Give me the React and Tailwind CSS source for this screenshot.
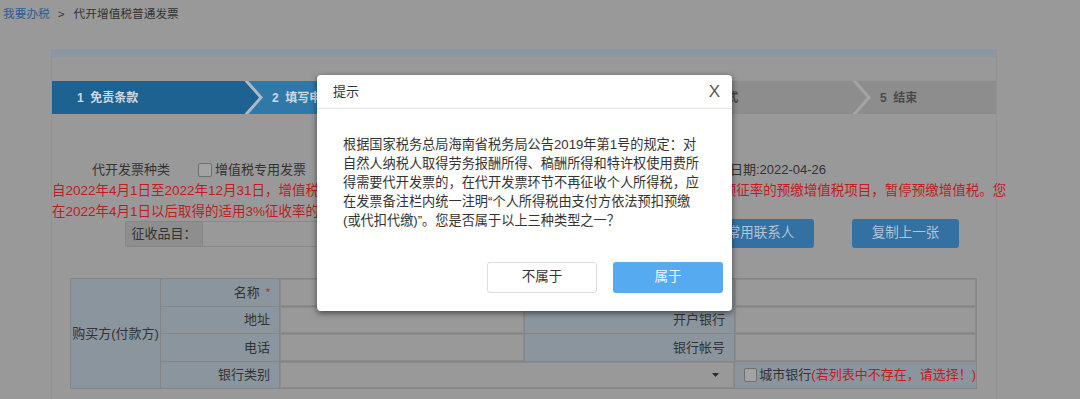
import React from "react";

function Arrow({ fill, line }) {
  return (
    <svg className="absolute top-0 -right-[16px] z-[1]" width="18" height="33" viewBox="0 0 18 33">
      <polygon points="0,0 15,16.5 0,33" fill={fill} />
      <polyline points="0.5,-1 16,16.5 0.5,34" fill="none" stroke={line} strokeWidth="3" />
    </svg>
  );
}

function Check({ className }) {
  return <span className={"inline-block w-[14px] h-[14px] rounded-[2px] border border-[#6f6f6f] bg-[#a3a3a3] " + (className || "")} />;
}

export default function App() {
  return (
    <div className="w-[1080px] h-[399px] overflow-hidden relative bg-[#999999] text-[#333333] font-['Liberation_Sans','Noto_Sans_CJK_SC',sans-serif]">
      <div className="h-[49px] pt-[6px] pl-[3px] text-[11.7px] leading-[16px] flex items-start">
        <span className="text-[#2c5b96]">我要办税</span>
        <span className="ml-[8px] text-[#3a3a3a]">&gt;</span>
        <span className="ml-[9px] text-[#333333]">代开增值税普通发票</span>
      </div>

      <div className="ml-[51px] w-[946px] h-[350px] border-x border-[#939393]">
        <div className="h-[8px] bg-[#8b97a2]" />

        <div className="mt-[24px] h-[33px] flex bg-[#8d8d8d] text-[12px] font-bold">
          <div className="relative w-[195px] h-full flex items-center pl-[25px] bg-[#1d6290] text-[#cdd9e2]">
            <span>1&nbsp;&nbsp;免责条款</span>
            <Arrow fill="#1d6290" line="#aeb9c1" />
          </div>
          <div className="relative w-[203px] h-full flex items-center pl-[25px] bg-[#2f78a8] text-[#cdd9e2]">
            <span>2&nbsp;&nbsp;填写申请表</span>
            <Arrow fill="#2f78a8" line="#aeb9c1" />
          </div>
          <div className="relative w-[202px] h-full flex items-center pl-[25px] text-[#4a4a4a]">
            <span>3&nbsp;&nbsp;确认信息</span>
            <Arrow fill="#8d8d8d" line="#a4a4a4" />
          </div>
          <div className="relative w-[203px] h-full flex items-center pl-[25px] text-[#4a4a4a]">
            <span>4&nbsp;&nbsp;缴款方式</span>
            <Arrow fill="#8d8d8d" line="#a4a4a4" />
          </div>
          <div className="relative flex-1 h-full flex items-center pl-[25px] text-[#4a4a4a]">
            <span>5&nbsp;&nbsp;结束</span>
          </div>
        </div>

        <div className="mt-[46px] h-[20px] flex items-center text-[13px]">
          <span className="ml-[40px]">代开发票种类</span>
          <Check className="ml-[28px]" />
          <span className="ml-[3px]">增值税专用发票</span>
          <Check className="ml-[20px]" />
          <span className="ml-[3px]">增值税普通发票</span>
          <span className="ml-auto mr-[170px]">申请日期:2022-04-26</span>
        </div>

        <div className="text-[13.5px] leading-[21px] text-[#c21b1f] whitespace-nowrap">
          <div>自2022年4月1日至2022年12月31日，增值税小规模纳税人适用3%征收率的应税销售收入，免征增值税；适用3%预征率的预缴增值税项目，暂停预缴增值税。您</div>
          <div>在2022年4月1日以后取得的适用3%征收率的应税销售收入，可以开具免税普通发票。</div>
        </div>

        <div className="-mt-[3px] h-[29px] flex items-center">
          <div className="ml-[73px] flex h-[26px]">
            <div className="w-[78px] h-full rounded-l-[3px] border border-[#868686] bg-[#8e8e8e] flex items-center justify-center text-[13px]">
              征收品目：
            </div>
            <div className="w-[220px] h-full border-y border-r border-[#8a8a8a] bg-[#999999]" />
          </div>
          <div className="ml-auto mr-[37px] flex gap-[38px]">
            <div className="w-[107px] h-[29px] rounded-[3px] bg-[#3471a3] text-[#b0c5d6] text-[13.5px] flex items-center justify-center">常用联系人</div>
            <div className="w-[107px] h-[29px] rounded-[3px] bg-[#3471a3] text-[#b0c5d6] text-[13.5px] flex items-center justify-center">复制上一张</div>
          </div>
        </div>

        <div className="mt-[30px] ml-[18px] w-[907px] grid grid-cols-[89px_118px_244px_209px_241px] grid-rows-[27px_26px_27px_26px] gap-px bg-[#858585] border border-[#858585] text-[13px]">
          <div className="row-span-4 bg-[#8b959d] flex items-center justify-center">购买方(付款方)</div>

          <div className="bg-[#8b959d] flex items-center justify-end pr-[9px]">
            名称<span className="ml-[6px] text-[#c21b1f] text-[11px]">*</span>
          </div>
          <div className="bg-[#999999] border border-[#8c8c8c]" />
          <div className="bg-[#8b959d] flex items-center justify-end pr-[9px]">纳税人识别号</div>
          <div className="bg-[#999999] border border-[#8c8c8c]" />

          <div className="bg-[#8b959d] flex items-center justify-end pr-[9px]">地址</div>
          <div className="bg-[#999999] border border-[#8c8c8c]" />
          <div className="bg-[#8b959d] flex items-center justify-end pr-[9px]">开户银行</div>
          <div className="bg-[#999999] border border-[#8c8c8c]" />

          <div className="bg-[#8b959d] flex items-center justify-end pr-[9px]">电话</div>
          <div className="bg-[#999999] border border-[#8c8c8c]" />
          <div className="bg-[#8b959d] flex items-center justify-end pr-[9px]">银行帐号</div>
          <div className="bg-[#999999] border border-[#8c8c8c]" />

          <div className="bg-[#8b959d] flex items-center justify-end pr-[9px]">银行类别</div>
          <div className="col-span-2 bg-[#999999] border border-[#8c8c8c] flex items-center justify-end pr-[14px]">
            <svg width="7" height="4" viewBox="0 0 7 4"><polygon points="0,0 7,0 3.5,4" fill="#2a2a2a" /></svg>
          </div>
          <div className="bg-[#8b959d] flex items-center pl-[9px] whitespace-nowrap">
            <Check />
            <span className="ml-[2px]">城市银行</span>
            <span className="text-[#c21b1f]">(若列表中不存在，请选择！)</span>
          </div>
        </div>
      </div>

      <div className="absolute z-20 left-[317px] top-[75px] w-[415px] h-[236px] bg-white rounded-[4px] shadow-[0_2px_6px_rgba(0,0,0,0.55)] flex flex-col">
        <div className="h-[34px] border-b border-[#e6e6e6] flex items-center pl-[16px] pr-[12px]">
          <span className="text-[13px] text-[#333333]">提示</span>
          <span className="ml-auto text-[17px] leading-none text-[#555555]">X</span>
        </div>
        <div className="pt-[26px] pl-[26px] text-[13.2px] leading-[19px] text-[#333333] whitespace-nowrap">
          <div>根据国家税务总局海南省税务局公告2019年第1号的规定：对</div>
          <div>自然人纳税人取得劳务报酬所得、稿酬所得和特许权使用费所</div>
          <div>得需要代开发票的，在代开发票环节不再征收个人所得税，应</div>
          <div>在发票备注栏内统一注明“个人所得税由支付方依法预扣预缴</div>
          <div>(或代扣代缴)”。您是否属于以上三种类型之一？</div>
        </div>
        <div className="mt-auto pb-[18px] pr-[9px] flex justify-end gap-[16px]">
          <div className="w-[110px] h-[31px] rounded-[3px] border border-[#dcdcdc] bg-white flex items-center justify-center text-[13.5px] text-[#333333]">不属于</div>
          <div className="w-[110px] h-[31px] rounded-[3px] bg-[#55aaf0] flex items-center justify-center text-[13.5px] text-[#f0f7ff]">属于</div>
        </div>
      </div>
    </div>
  );
}
